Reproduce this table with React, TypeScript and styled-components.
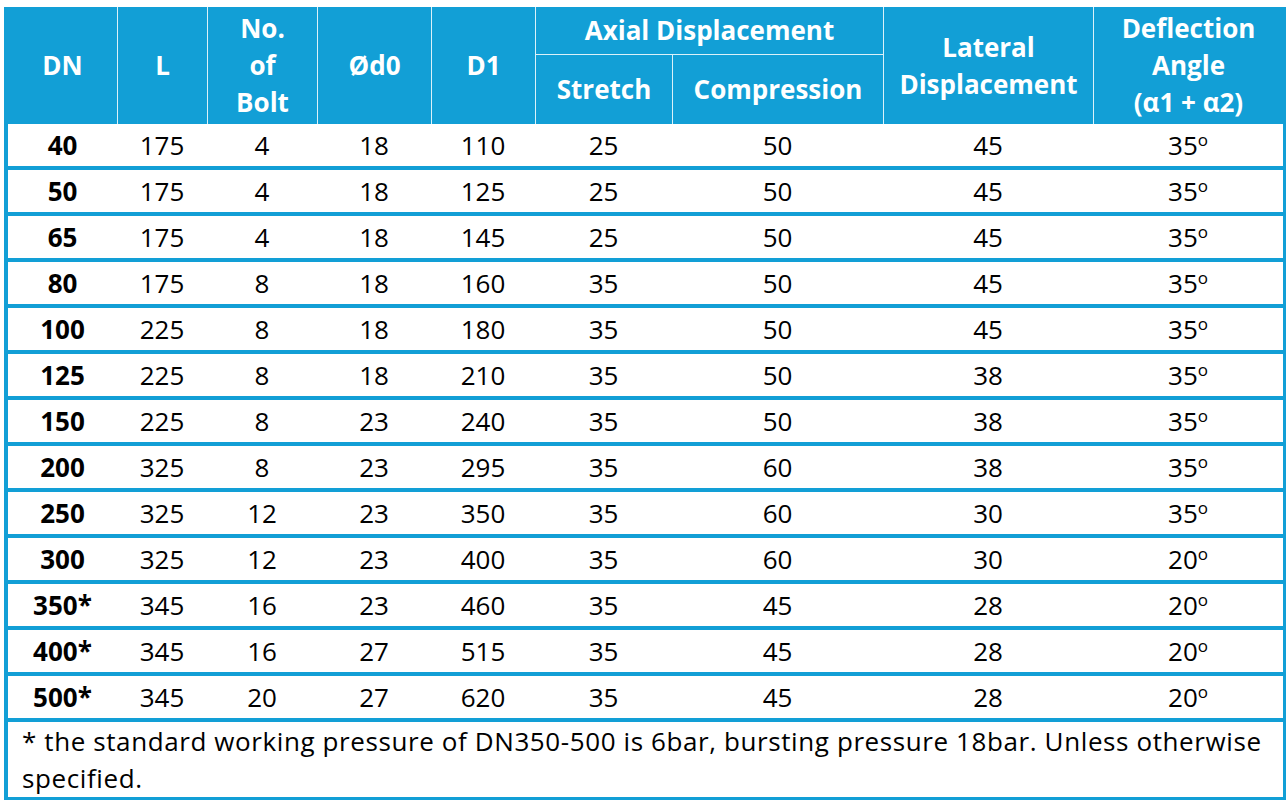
import React from 'react';
import styled, { createGlobalStyle } from 'styled-components';

const blue = '#129fd6';

const Global = createGlobalStyle`
  * { box-sizing: border-box; }
  body {
    margin: 0;
    background: #fff;
    font-family: "Open Sans", Lato, sans-serif;
  }
`;

const Frame = styled.div`
  width: 1282px;
  margin: 7px 0 0 4px;
  border-left: 4px solid ${blue};
  border-right: 3px solid ${blue};
  border-bottom: 3px solid ${blue};
`;

const Table = styled.table`
  width: 100%;
  border-collapse: separate;
  border-spacing: 0;
  table-layout: fixed;
  font-size: 26px;
  color: #000;
`;

const Head = styled.th<{ $top?: boolean; $first?: boolean; $group?: boolean }>`
  background: ${blue};
  color: #fff;
  font-weight: 700;
  line-height: 37px;
  padding: 0;
  text-align: center;
  vertical-align: middle;
  height: ${(p) => (p.$top ? '48px' : '69px')};
  border-left: ${(p) => (p.$first ? 'none' : '1px solid rgba(255,255,255,0.85)')};
  border-bottom: ${(p) => (p.$group ? '1px solid rgba(255,255,255,0.85)' : 'none')};
`;

const Cell = styled.td<{ $bold?: boolean }>`
  height: 46px;
  padding: 0;
  text-align: center;
  vertical-align: middle;
  font-weight: ${(p) => (p.$bold ? 700 : 400)};
  border-bottom: 4px solid ${blue};
`;

const Deg = styled.sup`
  font-size: 17px;
  vertical-align: 9px;
  line-height: 0;
`;

const Note = styled.div`
  font-size: 26px;
  line-height: 37px;
  letter-spacing: 0.6px;
  padding: 1px 8px 0 14px;
  color: #000;
`;

const widths = [109, 90, 110, 114, 104, 137, 211, 210, 190];

type Row = [string, number, number, number, number, number, number, number, number];

const rows: Row[] = [
  ['40', 175, 4, 18, 110, 25, 50, 45, 35],
  ['50', 175, 4, 18, 125, 25, 50, 45, 35],
  ['65', 175, 4, 18, 145, 25, 50, 45, 35],
  ['80', 175, 8, 18, 160, 35, 50, 45, 35],
  ['100', 225, 8, 18, 180, 35, 50, 45, 35],
  ['125', 225, 8, 18, 210, 35, 50, 38, 35],
  ['150', 225, 8, 23, 240, 35, 50, 38, 35],
  ['200', 325, 8, 23, 295, 35, 60, 38, 35],
  ['250', 325, 12, 23, 350, 35, 60, 30, 35],
  ['300', 325, 12, 23, 400, 35, 60, 30, 20],
  ['350*', 345, 16, 23, 460, 35, 45, 28, 20],
  ['400*', 345, 16, 27, 515, 35, 45, 28, 20],
  ['500*', 345, 20, 27, 620, 35, 45, 28, 20],
];

export default function App() {
  return (
    <>
      <Global />
      <Frame>
        <Table>
          <colgroup>
            {widths.map((w, i) => (
              <col key={i} style={{ width: w }} />
            ))}
          </colgroup>
          <thead>
            <tr>
              <Head $top $first rowSpan={2}>DN</Head>
              <Head $top rowSpan={2}>L</Head>
              <Head $top rowSpan={2}>No.<br />of<br />Bolt</Head>
              <Head $top rowSpan={2}>Ød0</Head>
              <Head $top rowSpan={2}>D1</Head>
              <Head $top $group colSpan={2}>Axial Displacement</Head>
              <Head $top rowSpan={2}>Lateral<br />Displacement</Head>
              <Head $top rowSpan={2}>Deflection<br />Angle<br />(α1 + α2)</Head>
            </tr>
            <tr>
              <Head>Stretch</Head>
              <Head>Compression</Head>
            </tr>
          </thead>
          <tbody>
            {rows.map((r) => (
              <tr key={r[0]}>
                <Cell $bold>{r[0]}</Cell>
                {r.slice(1, 8).map((v, i) => (
                  <Cell key={i}>{v}</Cell>
                ))}
                <Cell>
                  {r[8]}
                  <Deg>o</Deg>
                </Cell>
              </tr>
            ))}
          </tbody>
        </Table>
        <Note>
          * the standard working pressure of DN350-500 is 6bar, bursting pressure 18bar. Unless otherwise
          specified.
        </Note>
      </Frame>
    </>
  );
}
